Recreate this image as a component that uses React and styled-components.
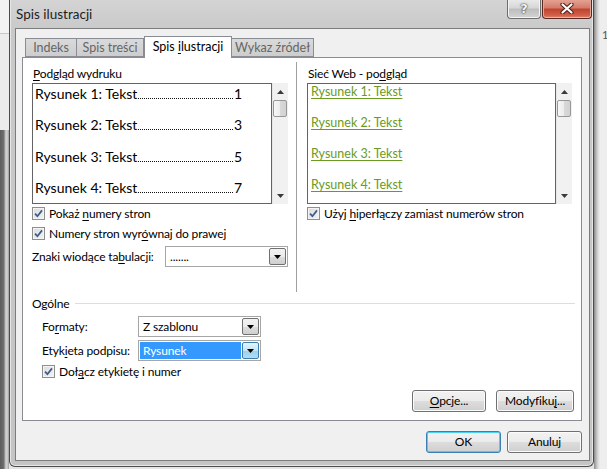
import React from 'react';
import styled, { createGlobalStyle } from 'styled-components';

const GlobalStyle = createGlobalStyle`
  html, body {
    margin: 0;
    padding: 0;
  }
  body {
    width: 607px;
    height: 469px;
    overflow: hidden;
    background: #e4e4e4;
    font-family: Lato, "Noto Sans", sans-serif;
    font-size: 12px;
    letter-spacing: -0.15px;
    color: #000;
  }
`;

const printEntries = [
  { label: 'Rysunek 1: Tekst', page: 1 },
  { label: 'Rysunek 2: Tekst', page: 3 },
  { label: 'Rysunek 3: Tekst', page: 5 },
  { label: 'Rysunek 4: Tekst', page: 7 },
];

function CheckMark() {
  return (
    <svg width="9" height="9" viewBox="0 0 9 9">
      <path d="M1 4.6 L3.4 7.2 L8 1.4" fill="none" stroke="#3e5a8e" strokeWidth="1.7" />
    </svg>
  );
}

function Arrow({ up }) {
  return (
    <svg width="7" height="4" viewBox="0 0 7 4">
      <path d={up ? 'M0 4 L3.5 0 L7 4 Z' : 'M0 0 L7 0 L3.5 4 Z'} fill="#3a3a3a" />
    </svg>
  );
}

function CloseGlyph() {
  return (
    <svg width="14" height="11" viewBox="0 0 14 11">
      <path d="M2.5 1.5 L11.5 9.5 M11.5 1.5 L2.5 9.5" stroke="#4a2019" strokeWidth="4.2" strokeLinecap="round" />
      <path d="M2.5 1.5 L11.5 9.5 M11.5 1.5 L2.5 9.5" stroke="#fff" strokeWidth="2.2" strokeLinecap="round" />
    </svg>
  );
}

function ScrollBar() {
  return (
    <Scroll>
      <ScrollArrow><Arrow up /></ScrollArrow>
      <Thumb />
      <ScrollTrack />
      <ScrollArrow><Arrow /></ScrollArrow>
    </Scroll>
  );
}

function Check({ children }) {
  return (
    <CheckRow>
      <CheckBox><CheckMark /></CheckBox>
      <span>{children}</span>
    </CheckRow>
  );
}

function Combo({ width, value, selected }) {
  return (
    <ComboBox width={width}>
      <ComboValue selected={selected}>{value}</ComboValue>
      <DropButton selected={selected}>
        <svg width="7" height="4" viewBox="0 0 7 4">
          <path d="M0 0 L7 0 L3.5 4 Z" fill="#000" />
        </svg>
      </DropButton>
    </ComboBox>
  );
}

function App() {
  return (
    <Screen>
      <GlobalStyle />
      <LeftBackdrop />
      <Window>
        <TitleBar>
          <Title>Spis ilustracji</Title>
          <CaptionButtons>
            <HelpButton>?</HelpButton>
            <CloseButton><CloseGlyph /></CloseButton>
          </CaptionButtons>
        </TitleBar>
        <Client>
          <TabStrip>
            <Tab width={52}>Indeks</Tab>
            <Tab width={67}>Spis treści</Tab>
            <Tab width={88} active>Spis <Hot>i</Hot>lustracji</Tab>
            <Tab width={82}>Wykaz źródeł</Tab>
          </TabStrip>
          <Panel>
            <Columns>
              <Column>
                <FieldLabel><Hot>P</Hot>odgląd wydruku</FieldLabel>
                <ListFrame>
                  <ListBox>
                    {printEntries.map((e) => (
                      <PrintRow key={e.page}>
                        <span>{e.label}</span>
                        <Leader />
                        <span>{e.page}</span>
                      </PrintRow>
                    ))}
                  </ListBox>
                  <ScrollBar />
                </ListFrame>
                <Check>Pokaż <Hot>n</Hot>umery stron</Check>
                <Check>Numery stron wyr<Hot>ó</Hot>wnaj do prawej</Check>
                <ComboRow>
                  <ComboLabel width={133}>Znaki wiodące ta<Hot>b</Hot>ulacji:</ComboLabel>
                  <Combo width={123} value="......." />
                </ComboRow>
              </Column>
              <VSeparator />
              <Column>
                <FieldLabel>Sieć Web - po<Hot>d</Hot>gląd</FieldLabel>
                <ListFrame>
                  <ListBox>
                    {printEntries.map((e) => (
                      <WebRow key={e.page}>
                        <WebLink>{e.label}</WebLink>
                      </WebRow>
                    ))}
                  </ListBox>
                  <ScrollBar />
                </ListFrame>
                <Check>Użyj <Hot>h</Hot>iperłączy zamiast numerów stron</Check>
              </Column>
            </Columns>
            <GroupHeader>
              <span>Ogólne</span>
              <GroupLine />
            </GroupHeader>
            <GroupBody>
              <ComboRow>
                <ComboLabel width={96}>Fo<Hot>r</Hot>maty:</ComboLabel>
                <Combo width={123} value="Z szablonu" />
              </ComboRow>
              <ComboRow>
                <ComboLabel width={96}>Etyk<Hot>i</Hot>eta podpisu:</ComboLabel>
                <Combo width={123} value="Rysunek" selected />
              </ComboRow>
              <Check>Doł<Hot>ą</Hot>cz etykietę i numer</Check>
            </GroupBody>
            <ButtonRow>
              <Button width={74}><Hot>O</Hot>pcje...</Button>
              <Button width={78}>Modyfiku<Hot>j</Hot>...</Button>
            </ButtonRow>
          </Panel>
          <DialogButtons>
            <Button width={75} isDefault>OK</Button>
            <Button width={75}>Anuluj</Button>
          </DialogButtons>
        </Client>
      </Window>
      <RightBackdrop>
        <PageNum>1</PageNum>
      </RightBackdrop>
    </Screen>
  );
}

const Screen = styled.div`
  display: flex;
  width: 607px;
  height: 469px;
  overflow: hidden;
`;

const LeftBackdrop = styled.div`
  width: 9px;
  flex-shrink: 0;
  background:
    linear-gradient(to bottom, #f3f3f3 0, #f3f3f3 33px, #c9c9c9 33px, #c9c9c9 34px, #ececec 34px, #ececec 130px, transparent 130px),
    linear-gradient(to right, #5d5d5d 0, #6f6f6f 4px, #b9b9b9 5px, #d6d6d6 7px, #9a9a9a 9px);
`;

const RightBackdrop = styled.div`
  flex: 1;
  position: relative;
  background:
    linear-gradient(to right, #8a8a8a 0, #b5b5b5 2px, #dadada 4px, #eeeeee 6px);
`;

const PageNum = styled.span`
  position: absolute;
  top: 28px;
  left: 8px;
  font-size: 11px;
  color: #555;
`;

const Window = styled.div`
  width: 585px;
  height: 467px;
  box-sizing: border-box;
  flex-shrink: 0;
  display: flex;
  flex-direction: column;
  padding: 0 3px 5px 5px;
  border: 1px solid #4b4b4b;
  border-top: 0;
  border-radius: 0 0 6px 6px;
  background: linear-gradient(to bottom, #d4d4d4 0, #c9c9c9 30px, #c4c4c4 100%);
  box-shadow: inset 1px 0 0 #e6e6e6, inset -1px 0 0 #e6e6e6, inset 0 -1px 0 #e6e6e6;
`;

const TitleBar = styled.div`
  height: 28px;
  display: flex;
  justify-content: space-between;
  align-items: flex-start;
`;

const Title = styled.div`
  padding: 6px 0 0 1px;
  font-size: 13.5px;
  letter-spacing: 0;
  line-height: 17px;
  color: #1e1e1e;
`;

const CaptionButtons = styled.div`
  display: flex;
  gap: 1px;
  margin-right: -2px;
`;

const HelpButton = styled.div`
  width: 34px;
  height: 19px;
  box-sizing: border-box;
  border: 1px solid #6d6d6d;
  border-top: 0;
  border-radius: 0 0 4px 4px;
  background: linear-gradient(to bottom, #e9e9e9 0, #d6d6d6 45%, #bdbdbd 50%, #d4d4d4 100%);
  box-shadow: inset 0 -1px 0 #f4f4f4, inset 1px 0 0 #f4f4f4, inset -1px 0 0 #f4f4f4;
  display: flex;
  justify-content: center;
  align-items: center;
  font-family: "DejaVu Sans", sans-serif;
  font-weight: bold;
  font-size: 13px;
  padding-bottom: 1px;
  color: #f4f4f4;
  text-shadow: 0 0 2px #333, 0 0 1px #333;
`;

const CloseButton = styled.div`
  width: 50px;
  height: 19px;
  box-sizing: border-box;
  border: 1px solid #5a2a22;
  border-top: 0;
  border-radius: 0 0 4px 4px;
  background: linear-gradient(to bottom, #e4a293 0, #d27a68 45%, #c0432f 50%, #d15f49 85%, #e08b74 100%);
  box-shadow: inset 0 -1px 0 #eab3a6, inset 1px 0 0 #e3a597, inset -1px 0 0 #e3a597;
  display: flex;
  justify-content: center;
  align-items: center;
  padding-bottom: 1px;
`;

const Client = styled.div`
  flex: 1;
  display: flex;
  flex-direction: column;
  padding: 8px 7px 7px 6px;
  border: 1px solid #7c7c7c;
  background: #f0f0f0;
  min-height: 0;
`;

const TabStrip = styled.div`
  display: flex;
  align-items: flex-end;
  height: 20px;
  padding-left: 3px;
  position: relative;
  z-index: 1;
`;

const Tab = styled.div`
  width: ${(p) => p.width}px;
  box-sizing: border-box;
  height: ${(p) => (p.active ? 22 : 19)}px;
  margin-bottom: ${(p) => (p.active ? -1 : 0)}px;
  border: 1px solid #898c95;
  border-bottom: ${(p) => (p.active ? '0' : '1px solid #898c95')};
  border-left-width: ${(p) => (p.active ? 1 : 0)}px;
  &:first-child {
    border-left-width: 1px;
  }
  background: ${(p) =>
    p.active ? '#fff' : 'linear-gradient(to bottom, #dadada 0, #cdcdcd 100%)'};
  color: ${(p) => (p.active ? '#000' : '#666')};
  text-align: center;
  font-size: 12.5px;
  letter-spacing: 0;
  line-height: ${(p) => (p.active ? 19 : 17)}px;
  white-space: nowrap;
`;

const Panel = styled.div`
  height: 364px;
  box-sizing: border-box;
  border: 1px solid #898c95;
  background: #fff;
  display: flex;
  flex-direction: column;
`;

const Columns = styled.div`
  display: grid;
  grid-template-columns: 256px 1px 267px;
  column-gap: 8px;
  padding: 4px 0 0 9px;
  height: 230px;
  & > :last-child {
    margin-left: 2px;
  }
`;

const Column = styled.div`
  display: flex;
  flex-direction: column;
  padding-top: 4px;
`;

const VSeparator = styled.div`
  background: #a0a0a0;
  height: 230px;
`;

const FieldLabel = styled.div`
  line-height: 15px;
  height: 15px;
  margin-bottom: 2px;
  padding-left: 1px;
`;

const Hot = styled.u`
  text-decoration-thickness: 1px;
  text-underline-offset: 1.5px;
`;

const ListFrame = styled.div`
  display: flex;
  height: 121px;
`;

const ListBox = styled.div`
  flex: 1;
  border: 1px solid #646464;
  background: #fff;
  overflow: hidden;
`;

const PrintRow = styled.div`
  display: flex;
  align-items: baseline;
  height: 31.33px;
  line-height: 20px;
  padding: 0 29px 0 2px;
  font-size: 14px;
  letter-spacing: 0;
  white-space: nowrap;
`;

const Leader = styled.span`
  flex: 1;
  border-bottom: 1px dotted #111;
  margin: 0 1px;
`;

const WebRow = styled.div`
  height: 31px;
  line-height: 16px;
  padding-left: 3px;
`;

const WebLink = styled.span`
  font-size: 12.5px;
  letter-spacing: 0;
  color: #6a9a22;
  text-decoration: underline;
  text-decoration-thickness: 1px;
  text-underline-offset: 2px;
`;

const Scroll = styled.div`
  width: 16px;
  display: flex;
  flex-direction: column;
  align-items: center;
  background: #f1f1f1;
  box-shadow: inset 1px 0 0 #e6e6e6;
`;

const ScrollArrow = styled.div`
  height: 17px;
  display: flex;
  align-items: center;
  justify-content: center;
`;

const Thumb = styled.div`
  width: 14px;
  height: 17px;
  box-sizing: border-box;
  border: 1px solid #979797;
  border-radius: 2px;
  background: linear-gradient(to right, #f7f7f7 0, #ececec 50%, #d9d9d9 51%, #d2d2d2 100%);
`;

const ScrollTrack = styled.div`
  flex: 1;
`;

const CheckRow = styled.div`
  display: flex;
  align-items: center;
  gap: 4px;
  height: 19.5px;
  white-space: nowrap;
`;

const CheckBox = styled.span`
  width: 13px;
  height: 13px;
  box-sizing: border-box;
  border: 1px solid #8f8f8f;
  background: linear-gradient(to bottom right, #dcdcdc 0, #f3f3f3 100%);
  box-shadow: inset 0 0 0 1px #f4f4f4;
  display: flex;
  align-items: center;
  justify-content: center;
  flex-shrink: 0;
`;

const ComboRow = styled.div`
  display: flex;
  align-items: center;
  height: 21px;
  margin-top: 3px;
`;

const ComboLabel = styled.span`
  width: ${(p) => p.width}px;
  white-space: nowrap;
`;

const ComboBox = styled.div`
  width: ${(p) => p.width}px;
  height: 21px;
  box-sizing: border-box;
  border: 1px solid #a6a6a6;
  background: #fff;
  display: flex;
  align-items: stretch;
  padding: 1px;
`;

const ComboValue = styled.div`
  flex: 1;
  margin-right: 1px;
  padding-left: 3px;
  line-height: 17px;
  background: ${(p) => (p.selected ? '#3399ff' : 'transparent')};
  color: ${(p) => (p.selected ? '#fff' : '#000')};
`;

const DropButton = styled.div`
  width: 17px;
  box-sizing: border-box;
  border: 1px solid ${(p) => (p.selected ? '#3c7fb1' : '#707070')};
  border-radius: 2px;
  background: ${(p) =>
    p.selected
      ? 'linear-gradient(to bottom, #e5f4fc 0, #c4e5f6 50%, #98d1ef 51%, #b3dcf2 100%)'
      : 'linear-gradient(to bottom, #f2f2f2 0, #ebebeb 50%, #dddddd 51%, #cfcfcf 100%)'};
  display: flex;
  align-items: center;
  justify-content: center;
`;

const GroupHeader = styled.div`
  display: flex;
  align-items: center;
  gap: 6px;
  height: 16px;
  margin: 3px 6px 0 9px;
`;

const GroupLine = styled.div`
  flex: 1;
  height: 1px;
  background: #d5dfe5;
`;

const GroupBody = styled.div`
  padding: 2px 0 0 19px;
  display: flex;
  flex-direction: column;
  & > ${CheckRow} {
    margin-top: 1px;
  }
`;

const ButtonRow = styled.div`
  margin-top: auto;
  display: flex;
  justify-content: flex-end;
  gap: 10px;
  padding: 0 7px 8px 0;
`;

const DialogButtons = styled.div`
  display: flex;
  justify-content: flex-end;
  gap: 6px;
  margin-top: auto;
`;

const Button = styled.div`
  width: ${(p) => p.width}px;
  height: 22px;
  box-sizing: border-box;
  border: 1px solid ${(p) => (p.isDefault ? '#3c7fb1' : '#707070')};
  border-radius: 3px;
  background: linear-gradient(to bottom, #f2f2f2 0, #ebebeb 50%, #dddddd 51%, #cfcfcf 100%);
  box-shadow: inset 0 0 0 1px ${(p) => (p.isDefault ? '#48d0f5' : '#fbfbfb')};
  display: flex;
  align-items: center;
  justify-content: center;
  line-height: 16px;
  white-space: nowrap;
`;

export default App;
